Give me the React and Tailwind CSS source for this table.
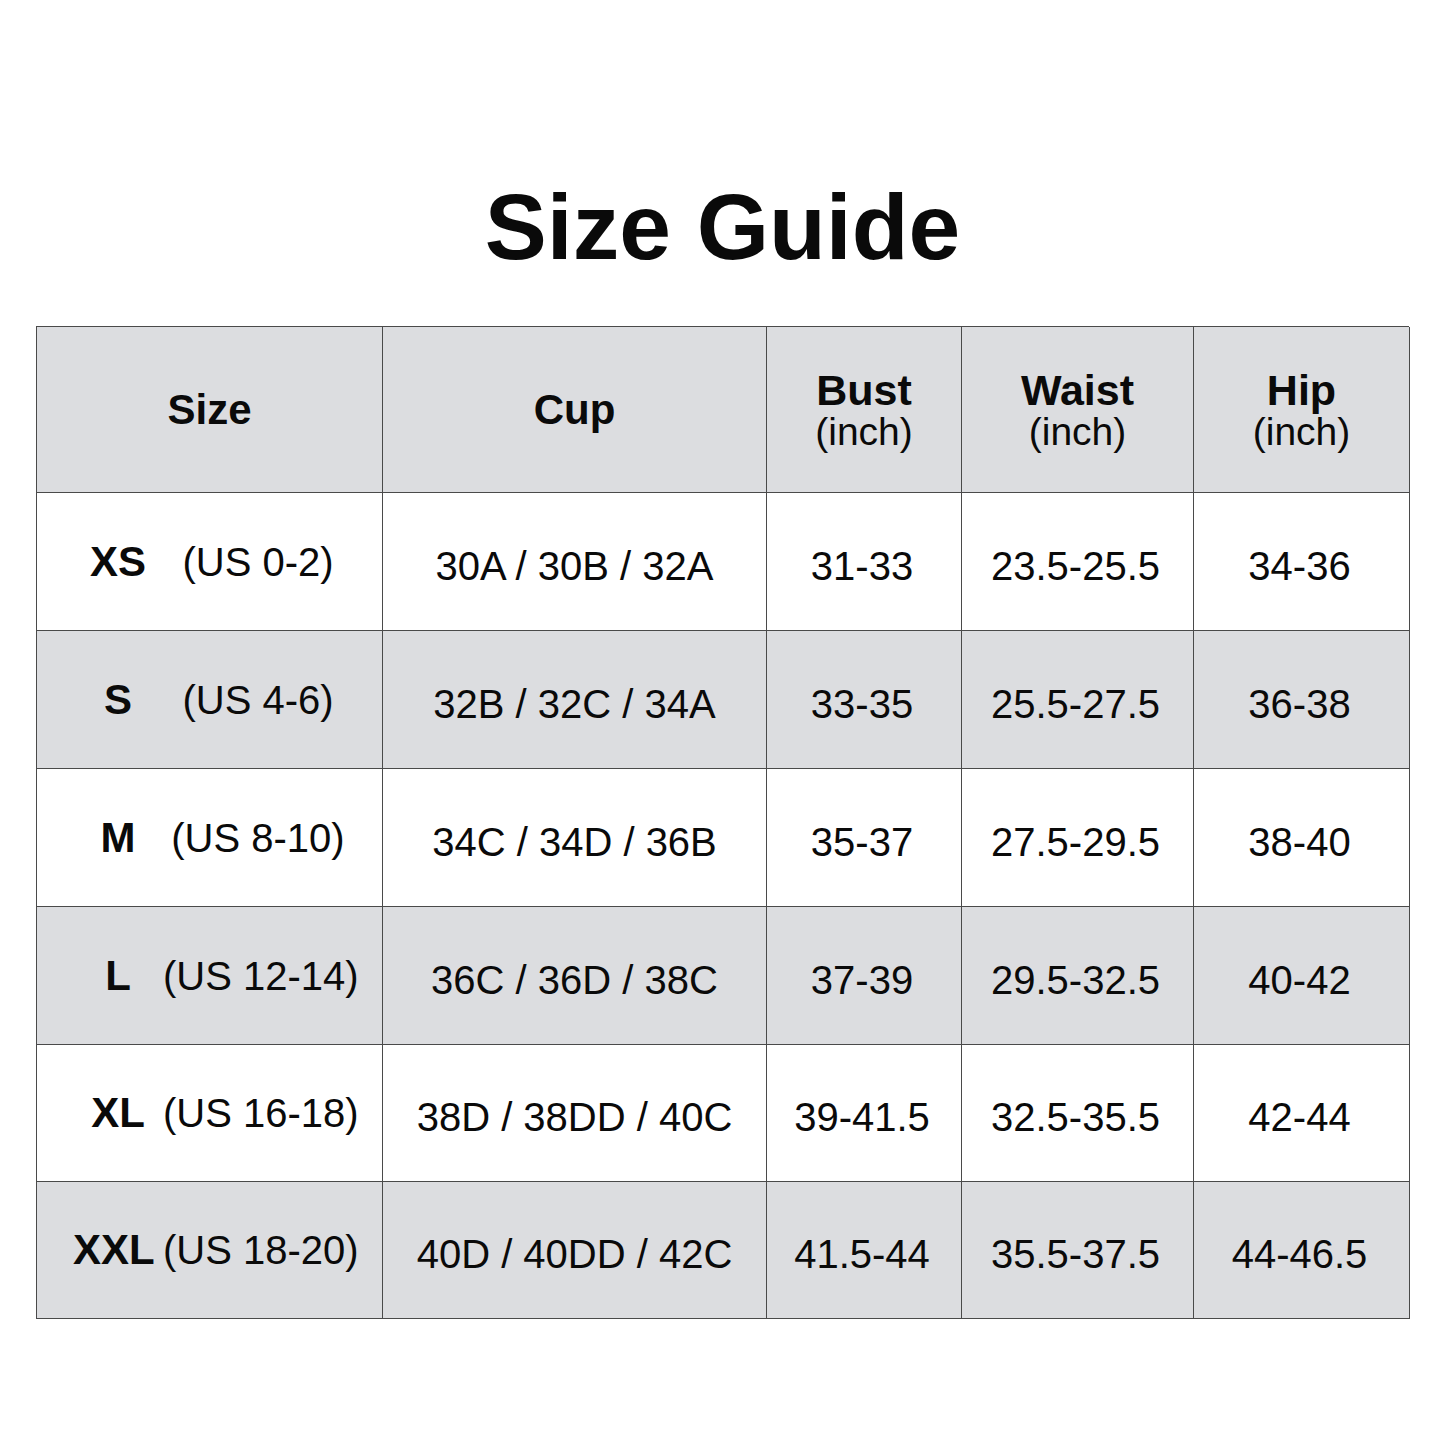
import React from "react";

const rows = [
  { size: "XS", us: "(US 0-2)", cup: "30A / 30B / 32A", bust: "31-33", waist: "23.5-25.5", hip: "34-36" },
  { size: "S", us: "(US 4-6)", cup: "32B / 32C / 34A", bust: "33-35", waist: "25.5-27.5", hip: "36-38" },
  { size: "M", us: "(US 8-10)", cup: "34C / 34D / 36B", bust: "35-37", waist: "27.5-29.5", hip: "38-40" },
  { size: "L", us: "(US 12-14)", cup: "36C / 36D / 38C", bust: "37-39", waist: "29.5-32.5", hip: "40-42" },
  { size: "XL", us: "(US 16-18)", cup: "38D / 38DD / 40C", bust: "39-41.5", waist: "32.5-35.5", hip: "42-44" },
  { size: "XXL", us: "(US 18-20)", cup: "40D / 40DD / 42C", bust: "41.5-44", waist: "35.5-37.5", hip: "44-46.5" },
];

const heights = ["h-[138px]", "h-[138px]", "h-[138px]", "h-[138px]", "h-[137px]", "h-[137px]"];

function Cell({ children, className = "" }) {
  return (
    <div className={`flex items-center justify-center border-r border-b border-[#4a4a4a] ${className}`}>
      {children}
    </div>
  );
}

export default function App() {
  return (
    <div
      className="w-[1445px] h-[1445px] bg-white text-[#0a0a0a]"
      style={{ fontFamily: '"Liberation Sans", Arial, sans-serif' }}
    >
      {/* Title */}
      <div className="pt-[181px] h-[326px]">
        <h1 className="text-center text-[93px] leading-[93px] font-bold">Size Guide</h1>
      </div>

      {/* Table */}
      <div className="ml-[36px] w-[1373px] grid grid-cols-[346px_384px_195px_232px_216px] border-l border-t border-[#4a4a4a]">
        {/* Header */}
        <Cell className="h-[166px] bg-[#dcdde0]">
          <span className="text-[42px] font-bold leading-none">Size</span>
        </Cell>
        <Cell className="h-[166px] bg-[#dcdde0]">
          <span className="text-[42px] font-bold leading-none">Cup</span>
        </Cell>
        {["Bust", "Waist", "Hip"].map((h) => (
          <Cell key={h} className="h-[166px] bg-[#dcdde0]">
            <div className="flex flex-col items-center">
              <span className="text-[43px] font-bold leading-[44px]">{h}</span>
              <span className="text-[39px] leading-[40px]">(inch)</span>
            </div>
          </Cell>
        ))}

        {/* Rows */}
        {rows.map((r, i) => {
          const bg = i % 2 === 0 ? "bg-white" : "bg-[#dcdde0]";
          const h = heights[i];
          const label = r.size === "XXL" ? "text-right pr-[9px]" : "text-center";
          return (
            <React.Fragment key={r.size}>
              <Cell className={`${h} ${bg} !justify-start`}>
                <div className="flex items-center pl-[36px] whitespace-nowrap">
                  <span className={`w-[90px] ${label} text-[42px] font-bold leading-none`}>{r.size}</span>
                  <span className="w-[190px] text-center text-[40px] leading-none">{r.us}</span>
                </div>
              </Cell>
              <Cell className={`${h} ${bg}`}>
                <span className="text-[40px] leading-none pt-2 whitespace-nowrap">{r.cup}</span>
              </Cell>
              <Cell className={`${h} ${bg}`}>
                <span className="text-[40px] leading-none pt-2 pr-1">{r.bust}</span>
              </Cell>
              <Cell className={`${h} ${bg}`}>
                <span className="text-[40px] leading-none pt-2 pr-1">{r.waist}</span>
              </Cell>
              <Cell className={`${h} ${bg}`}>
                <span className="text-[40px] leading-none pt-2 pr-1">{r.hip}</span>
              </Cell>
            </React.Fragment>
          );
        })}
      </div>
    </div>
  );
}
